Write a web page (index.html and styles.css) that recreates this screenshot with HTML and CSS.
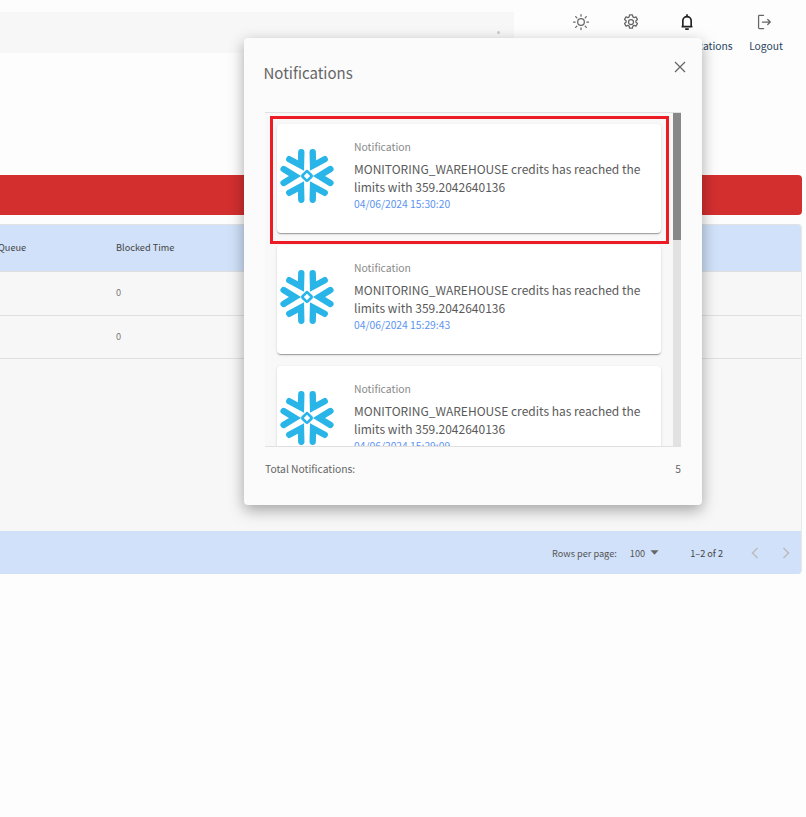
FILE: index.html
```html
<!DOCTYPE html>
<html lang="en">
<head>
<meta charset="utf-8">
<title>Notifications</title>
<link rel="stylesheet" href="styles.css">
</head>
<body>
<svg class="defs" width="0" height="0" aria-hidden="true">
  <symbol id="flake" viewBox="-28 -28 56 56">
    <g fill="none" stroke="#29b5e8" stroke-width="6.6" stroke-linecap="round" stroke-linejoin="miter" stroke-miterlimit="4">
      <path d="M-24.3 -7.2 L-12.5 0 L-24.3 7.2"/>
      <path d="M-24.3 -7.2 L-12.5 0 L-24.3 7.2" transform="rotate(60)"/>
      <path d="M-24.3 -7.2 L-12.5 0 L-24.3 7.2" transform="rotate(120)"/>
      <path d="M-24.3 -7.2 L-12.5 0 L-24.3 7.2" transform="rotate(180)"/>
      <path d="M-24.3 -7.2 L-12.5 0 L-24.3 7.2" transform="rotate(240)"/>
      <path d="M-24.3 -7.2 L-12.5 0 L-24.3 7.2" transform="rotate(300)"/>
    </g>
    <rect x="-3.7" y="-3.7" width="7.4" height="7.4" rx="1" transform="rotate(45)" fill="none" stroke="#29b5e8" stroke-width="2.8"/>
  </symbol>
</svg>

<div class="page">
  <header class="topbar">
    <div class="search"><span class="search-mark"></span></div>
    <nav class="nav">
      <div class="nav-item nav-sun">
        <svg class="icon" viewBox="0 0 24 24" fill="none" stroke="#666" stroke-width="1.5" stroke-linecap="round"><circle cx="12" cy="12" r="4"/><path d="M12 3v2M12 19v2M3 12h2M19 12h2M5.6 5.6l1.4 1.4M17 17l1.4 1.4M5.6 18.4L7 17M17 7l1.4-1.4"/></svg>
      </div>
      <div class="nav-item nav-gear">
        <svg class="icon" viewBox="0 0 24 24" fill="none" stroke="#666" stroke-width="1.5" stroke-linejoin="round"><path d="M10.3 3.5h3.4l.5 2.4 1.5.8 2.3-.8 1.7 3-1.8 1.6v1.8l1.8 1.6-1.7 3-2.3-.8-1.5.8-.5 2.4h-3.4l-.5-2.4-1.5-.8-2.3.8-1.7-3 1.8-1.6v-1.8L4.3 8.9l1.7-3 2.3.8 1.5-.8z"/><circle cx="12" cy="12" r="3"/></svg>
      </div>
      <div class="nav-item nav-bell">
        <svg class="icon" viewBox="0 0 24 24" fill="none" stroke="#222" stroke-width="2" stroke-linejoin="round"><path d="M7 17V10.5a5 5 0 0 1 10 0V17M5.5 17.5h13"/><path d="M12 3.5v2M10.5 20.5h3" stroke-linecap="round"/></svg>
        <span class="nav-label">Notifications</span>
      </div>
      <div class="nav-item nav-logout">
        <svg class="icon" viewBox="0 0 24 24" fill="none" stroke="#666" stroke-width="1.5" stroke-linecap="round" stroke-linejoin="round"><path d="M11.5 4H6.5a1 1 0 0 0-1 1v14a1 1 0 0 0 1 1h5"/><path d="M10 12h9.5M16.5 9l3 3-3 3"/></svg>
        <span class="nav-label">Logout</span>
      </div>
    </nav>
  </header>

  <main class="content">
    <div class="alert-bar"></div>
    <section class="table-card">
      <div class="row row-head">
        <span class="cell cell-queue">Queue</span>
        <span class="cell">Blocked Time</span>
      </div>
      <div class="row row-one"><span class="cell cell-queue"></span><span class="cell cell-value">0</span></div>
      <div class="row row-two"><span class="cell cell-queue"></span><span class="cell cell-value">0</span></div>
      <div class="table-empty"></div>
      <div class="table-foot">
        <span class="rows-label">Rows per page:</span>
        <span class="rows-value">100</span>
        <svg class="caret" viewBox="0 0 10 5"><path d="M0.5 0h9L5 5z" fill="#666"/></svg>
        <span class="range">1–2 of 2</span>
        <svg class="chev chev-prev" viewBox="0 0 10 14" fill="none" stroke="#bbb" stroke-width="1.5"><path d="M7.5 2L2.5 7l5 5"/></svg>
        <svg class="chev chev-next" viewBox="0 0 10 14" fill="none" stroke="#bbb" stroke-width="1.5"><path d="M2.5 2l5 5-5 5"/></svg>
      </div>
    </section>
  </main>
</div>

<div class="modal" role="dialog" aria-label="Notifications">
  <div class="modal-head">
    <h2 class="modal-title">Notifications</h2>
    <svg class="close" viewBox="0 0 12 12" fill="none" stroke="#666" stroke-width="1.3"><path d="M1 1l10 10M11 1L1 11"/></svg>
  </div>
  <div class="list-frame">
    <div class="list">
      <article class="card">
        <svg class="logo"><use href="#flake"/></svg>
        <div class="card-text">
          <div class="card-kind">Notification</div>
          <div class="card-msg">MONITORING_WAREHOUSE credits has reached the limits with 359.2042640136</div>
          <div class="card-date">04/06/2024 15:30:20</div>
        </div>
      </article>
      <article class="card">
        <svg class="logo"><use href="#flake"/></svg>
        <div class="card-text">
          <div class="card-kind">Notification</div>
          <div class="card-msg">MONITORING_WAREHOUSE credits has reached the limits with 359.2042640136</div>
          <div class="card-date">04/06/2024 15:29:43</div>
        </div>
      </article>
      <article class="card">
        <svg class="logo"><use href="#flake"/></svg>
        <div class="card-text">
          <div class="card-kind">Notification</div>
          <div class="card-msg">MONITORING_WAREHOUSE credits has reached the limits with 359.2042640136</div>
          <div class="card-date">04/06/2024 15:29:09</div>
        </div>
      </article>
    </div>
    <div class="scrollbar"><div class="scroll-thumb"></div></div>
    <div class="highlight"></div>
  </div>
  <div class="modal-foot">
    <span>Total Notifications:</span>
    <span>5</span>
  </div>
</div>
</body>
</html>
```
FILE: styles.css
```css
* { box-sizing: border-box; }
html, body { margin: 0; padding: 0; }
body {
  width: 806px;
  height: 817px;
  overflow: hidden;
  background: #fdfdfd;
  font-family: "Noto Sans CJK SC", "Noto Sans", sans-serif;
  color: #555;
  position: relative;
}
.defs { position: absolute; }

/* top bar */
.topbar { display: flex; height: 62px; padding-top: 12px; }
.search { width: 514px; height: 41px; background: #f7f7f7; position: relative; }
.search-mark {
  position: absolute; left: 497px; top: 19px;
  width: 3px; height: 3px; border-radius: 50%; background: #ccc;
}
.nav { display: flex; margin-left: 42px; }
.nav-item { display: flex; flex-direction: column; align-items: center; }
.icon { width: 20px; height: 20px; flex: none; }
.nav-sun, .nav-gear { width: 50px; }
.nav-bell { width: 62px; }
.nav-logout { width: 60px; margin-left: 16px; }
.nav-label { font-size: 10.3px; line-height: 16px; margin-top: 6px; color: #2a4560; white-space: nowrap; }
.nav-bell .nav-label { margin-left: 30px; }
.nav-logout .nav-label { margin-left: 4px; }

/* content */
.content { padding: 113px 4px 0 0; }
.alert-bar { height: 40px; background: #d32f2f; border-radius: 0 4px 4px 0; }
.table-card {
  margin-top: 9px;
  height: 350px;
  display: flex;
  flex-direction: column;
  background: #f7f7f7;
  border-top: 1px solid #e2e2e2;
  border-right: 1px solid #e8e8e8;
  border-radius: 0 4px 4px 0;
  overflow: hidden;
}
.row { display: flex; align-items: center; font-size: 9.2px; border-bottom: 1px solid #e0e0e0; }
.row-head { height: 47px; background: #d0e1f9; color: #444; flex: none; padding-bottom: 2px; }
.row-one { height: 44px; flex: none; padding-bottom: 3px; }
.row-two { height: 43px; flex: none; padding-bottom: 2px; }
.cell-queue { width: 116px; text-indent: -2px; }
.cell-value { color: #777; }
.table-empty { flex: 1; }
.table-foot {
  height: 43px;
  flex: none;
  background: #d0e1f9;
  display: flex;
  align-items: center;
  font-size: 9.2px;
  color: #555;
  padding-left: 552px;
  white-space: nowrap;
}
.rows-value { margin-left: 13px; }
.caret { width: 9px; height: 5px; margin-left: 5px; }
.range { margin-left: 31px; color: #444; }
.chev { width: 10px; height: 14px; }
.chev-prev { margin-left: 27px; }
.chev-next { margin-left: 21px; }

/* modal */
.modal {
  position: absolute;
  left: 244px;
  top: 38px;
  width: 458px;
  height: 467px;
  background: #fbfbfb;
  border-radius: 4px;
  box-shadow: 0 5px 15px rgba(0,0,0,.35);
  display: flex;
  flex-direction: column;
}
.modal-head {
  height: 74px;
  flex: none;
  display: flex;
  justify-content: space-between;
  padding: 23px 16px 0 19.5px;
}
.modal-title { margin: 0; font-size: 15px; line-height: 24px; font-weight: 400; color: #666; }
.close { width: 12px; height: 12px; }
.list-frame {
  position: relative;
  margin: 0 21px;
  height: 335px;
  flex: none;
  display: flex;
  background: #f8f8f8;
  border-top: 1px solid #e0e0e0;
  border-bottom: 1px solid #e0e0e0;
}
.list {
  flex: 1;
  overflow: hidden;
  padding: 11px 12px 0 12px;
  display: flex;
  flex-direction: column;
  gap: 12px;
}
.card {
  flex: none;
  height: 109px;
  background: #fff;
  border-radius: 4px;
  box-shadow: 0 2px 1px -1px rgba(0,0,0,.2), 0 1px 1px rgba(0,0,0,.14), 0 1px 3px rgba(0,0,0,.12);
  display: flex;
  padding-left: 3px;
}
.logo { width: 54px; height: 54px; margin-top: 25px; flex: none; }
.card-text { margin-left: 20px; padding-top: 14px; width: 292px; }
.card-kind { font-size: 10.4px; line-height: 18px; color: #8a8a8a; }
.card-msg { font-size: 12px; line-height: 18px; margin-top: 4px; color: #5a5a5a; }
.card-date { font-size: 10.3px; line-height: 16px; margin-top: 0; color: #5b93f0; }
.scrollbar { width: 8px; flex: none; background: #e2e2e2; }
.scroll-thumb { height: 127px; background: #888; }
.highlight {
  position: absolute;
  left: 5px;
  top: 3px;
  width: 399px;
  height: 128px;
  border: 3.5px solid #ed1c24;
  pointer-events: none;
}
.modal-foot {
  display: flex;
  justify-content: space-between;
  margin: 0 21px;
  padding-top: 13px;
  font-size: 10.3px;
  line-height: 18px;
  color: #666;
}
```
